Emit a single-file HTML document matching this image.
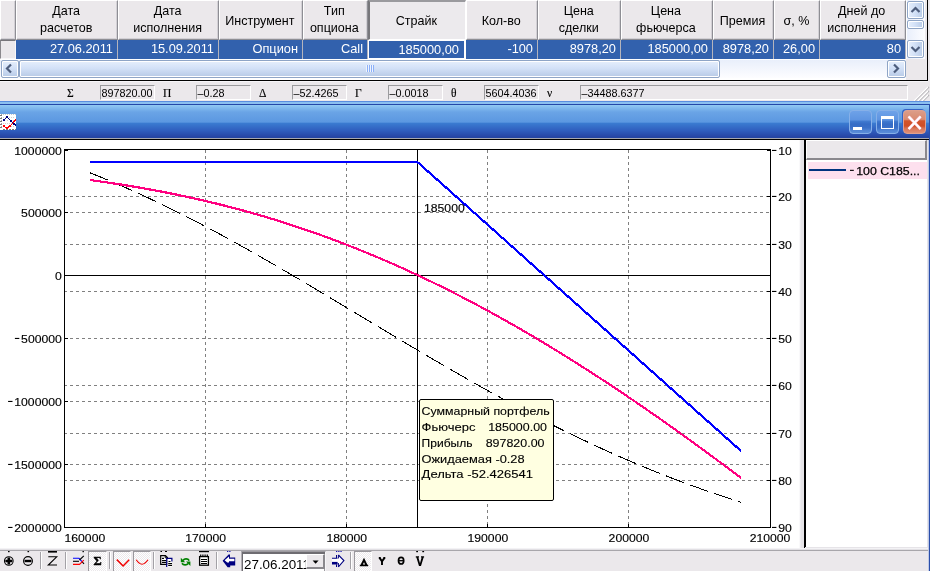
<!DOCTYPE html>
<html><head><meta charset="utf-8">
<style>
html,body{margin:0;padding:0}
body{width:930px;height:571px;position:relative;overflow:hidden;background:#ebe8eb;font-family:"Liberation Sans",sans-serif;font-size:13px;color:#000}
.abs{position:absolute}
/* table */
#grid{left:0;top:0;width:927px;height:80px;background:#fff;border-right:1px solid #000;border-bottom:1px solid #000;box-shadow:0 1px 0 #f6f5f8}
.hc{position:absolute;top:0;height:40px;background:#ebe8eb;box-sizing:border-box;border-left:1px solid #fff;border-top:1px solid #fff;border-right:1px solid #8e8e94;border-bottom:1px solid #8e8e94;box-shadow:inset -1px -1px 0 #d2d0d5;text-align:center;font-size:13px;line-height:17px;display:flex;align-items:center;justify-content:center;padding-bottom:2px}
.hc.press{border-left:2px solid #77777b;border-top:2px solid #9a9a9e;border-right:1px solid #fff;border-bottom:1px solid #fff;background:#eceaed;box-shadow:none}
.rc{position:absolute;top:40px;height:19px;background:#3261ad;color:#fff;box-sizing:border-box;border-right:1px solid #b4b4bc;text-align:right;font-size:12.8px;line-height:18px;padding-right:4px}
.sx{display:inline-block;transform-origin:100% 50%;white-space:nowrap}
.hc .sx{transform-origin:50% 50%;transform:scaleX(0.965);position:relative;left:-1px}.hc .s1{top:1px}
/* stats */
.sb{position:absolute;top:85px;height:15px;width:55px;box-sizing:border-box;border-top:1px solid #9b9b9e;border-left:1px solid #9b9b9e;border-right:1px solid #fff;border-bottom:1px solid #fff;font-size:10.8px;line-height:14px;padding-left:0.5px;white-space:nowrap;overflow:hidden}
.sl{position:absolute;top:85px;font-family:"Liberation Serif",serif;font-size:11.5px;line-height:16px;-webkit-text-stroke:0.15px #000}
/* title */
#title{left:0;top:101px;width:930px;height:37px;background:linear-gradient(#5a8ee0 0,#5a8ee0 1px,#8cc0f0 1px,#8cc0f0 3px,#2448a8 3px,#2448a8 4px,#92caf3 4px,#86bff0 6px,#6aa4e6 11px,#5e9ae2 19px,#5c98e1 21px,#3a7ad0 22.5px,#3060c0 29px,#2848a8 35px,#2444a0 37px)}
.sbtn{box-sizing:border-box;border:1px solid #8fa5c6;border-radius:2px;background:linear-gradient(#e6effc,#d3e1f7 45%,#b7cae6);box-shadow:inset 0 0 0 1px #fff}.sbtn.v{background:linear-gradient(90deg,#e6effc,#d3e1f7 45%,#b7cae6)}
.sbtn svg{display:block;position:absolute;left:-1px;top:-1px}

.tbtn{position:absolute;top:110px;width:23px;height:24px;box-sizing:border-box;border:1px solid #86b0e8;border-radius:4px;background:linear-gradient(#6ea2e8 0,#5e94e1 40%,#3e78ce 48%,#356cc6 60%,#3a70c8 76%,#5386d4 90%,#5a8cd8 100%)}
.tbtn.cl{box-shadow:-1px -1px 0 #3462c6;background:linear-gradient(#dc9c88 0,#d98b72 38%,#d2542c 45%,#cf4e27 68%,#d9775a 80%,#de9078 100%);border-color:#e0a08e}
.sep{position:absolute;top:552px;width:2px;height:17px;background:linear-gradient(90deg,#a3a1a6 0,#a3a1a6 50%,#fff 50%)}
.chk{position:absolute;top:551px;height:20px;box-sizing:border-box;border-top:1px solid #9a989d;border-left:1px solid #9a989d;border-right:1px solid #fff;background-color:#f5f4f6;background-image:repeating-conic-gradient(#fff 0 25%,#ebe8eb 0 50%);background-size:2px 2px}
</style></head><body><div id="root" style="position:absolute;left:0;top:0;width:930px;height:571px;will-change:transform">
<!-- GRID -->
<div class="abs" id="grid"></div>
<div class="hc" style="left:0;width:16px"></div>
<div class="hc" style="left:16px;width:102px"><span class="sx">Дата<br>расчетов</span></div>
<div class="hc" style="left:118px;width:101px"><span class="sx">Дата<br>исполнения</span></div>
<div class="hc" style="left:219px;width:84px"><span class="sx s1">Инструмент</span></div>
<div class="hc" style="left:303px;width:65px"><span class="sx">Тип<br>опциона</span></div>
<div class="hc press" style="left:368px;width:98px"><span class="sx s1">Страйк</span></div>
<div class="hc" style="left:466px;width:72px"><span class="sx s1">Кол-во</span></div>
<div class="hc" style="left:538px;width:83px"><span class="sx">Цена<br>сделки</span></div>
<div class="hc" style="left:621px;width:92px"><span class="sx">Цена<br>фьючерса</span></div>
<div class="hc" style="left:713px;width:61px"><span class="sx s1">Премия</span></div>
<div class="hc" style="left:774px;width:46px"><span class="sx s1">σ, %</span></div>
<div class="hc" style="left:820px;width:86px"><span class="sx">Дней до<br>исполнения</span></div>
<div class="abs" style="left:0;top:40px;width:16px;height:19px;box-sizing:border-box;background:#ebe8eb;border-left:1px solid #8a888d;border-top:1px solid #77757a;border-right:1px solid #f8f7f9;border-bottom:1px solid #f8f7f9"></div>
<div class="rc" style="left:16px;width:102px"><span class="sx">27.06.2011</span></div>
<div class="rc" style="left:118px;width:101px"><span class="sx">15.09.2011</span></div>
<div class="rc" style="left:219px;width:84px"><span class="sx">Опцион</span></div>
<div class="rc" style="left:303px;width:65px"><span class="sx">Call</span></div>
<div class="rc" style="left:368px;width:98px;border:1px solid #fff;border-right:2px solid #fff;line-height:17px;padding-right:5px"><span class="sx">185000,00</span></div>
<div class="rc" style="left:466px;width:72px"><span class="sx">-100</span></div>
<div class="rc" style="left:538px;width:83px"><span class="sx">8978,20</span></div>
<div class="rc" style="left:621px;width:92px"><span class="sx">185000,00</span></div>
<div class="rc" style="left:713px;width:61px"><span class="sx">8978,20</span></div>
<div class="rc" style="left:774px;width:46px"><span class="sx">26,00</span></div>
<div class="rc" style="left:820px;width:86px"><span class="sx">80</span></div>
<!-- hscroll -->
<div class="abs" id="hs" style="left:0;top:60px;width:906px;height:18px;background:linear-gradient(#e9effb,#fdfdff)"></div>
<div class="abs" id="vs" style="left:907px;top:0;width:18px;height:59px;background:linear-gradient(90deg,#e9effb,#fdfdff)"></div>

<div class="abs" style="left:906px;top:59px;width:21px;height:21px;background:#ebe8eb"></div>
<div class="abs" style="left:925px;top:0;width:2px;height:60px;background:#ebe8eb"></div>
<svg class="abs" style="left:908px;top:84px" width="22" height="18" viewBox="0 0 22 18"><g stroke-width="1.2" fill="none"><path d="M7 17 L21 3 M11 17 L21 7 M15 17 L21 11" stroke="#a9a7ac"/><path d="M6 17 L20 3 M10 17 L20 7 M14 17 L20 11" stroke="#fff"/></g></svg>
<!-- hscroll parts -->
<div class="abs sbtn" style="left:1px;top:60px;width:18px;height:18px"><svg width="17" height="17" viewBox="0 0 17 17"><path d="M10 4.5 L6 8.5 L10 12.5" fill="none" stroke="#4d5d7c" stroke-width="2.2"/></svg></div>
<div class="abs sbtn" style="left:887px;top:60px;width:19px;height:18px"><svg width="18" height="17" viewBox="0 0 18 17"><path d="M7 4.5 L11 8.5 L7 12.5" fill="none" stroke="#4d5d7c" stroke-width="2.2"/></svg></div>
<div class="abs" style="left:19px;top:60px;width:701px;height:18px;box-sizing:border-box;border:1px solid #8fa5c6;border-radius:2px;box-shadow:inset 0 0 0 1px #fff;background:linear-gradient(#e6effc,#d3e1f7 45%,#b7cae6)"></div>
<div class="abs" style="left:366px;top:65px;width:8px;height:7px;background:repeating-linear-gradient(90deg,#eef4fe 0,#eef4fe 1px,#8cb0f8 1px,#8cb0f8 2px)"></div>
<!-- vscroll parts -->
<div class="abs sbtn v" style="left:907px;top:1px;width:17px;height:18px"><svg width="17" height="18" viewBox="0 0 17 18"><path d="M4.5 11 L8.5 7 L12.5 11" fill="none" stroke="#4d5d7c" stroke-width="2.2"/></svg></div>
<div class="abs sbtn v" style="left:907px;top:40px;width:17px;height:18px"><svg width="17" height="18" viewBox="0 0 17 18"><path d="M4.5 7 L8.5 11 L12.5 7" fill="none" stroke="#4d5d7c" stroke-width="2.2"/></svg></div>
<div class="abs" style="left:907px;top:20px;width:17px;height:9px;box-sizing:border-box;border:1px solid #8fa5c6;border-radius:2px;box-shadow:inset 0 0 0 1px #fff;background:linear-gradient(90deg,#e6effc,#d3e1f7 45%,#b7cae6)"></div>
<!-- STATS -->
<div class="sl" style="left:67px">Σ</div><div class="sb" style="left:100px">897820.00</div>
<div class="sl" style="left:163px">Π</div><div class="sb" style="left:196px">–0.28</div>
<div class="sl" style="left:259px">Δ</div><div class="sb" style="left:292px">–52.4265</div>
<div class="sl" style="left:355px">Γ</div><div class="sb" style="left:388px">–0.0018</div>
<div class="sl" style="left:451px">θ</div><div class="sb" style="left:484px">5604.4036</div>
<div class="sl" style="left:547px">ν</div><div class="sb" style="left:580px;width:328px">–34488.6377</div>
<!-- TITLE -->
<div class="abs" id="title"></div>
<div class="abs" style="left:0;top:138px;width:930px;height:1px;background:#a8a8b0"></div><div class="abs" style="left:0;top:139px;width:930px;height:1px;background:#000"></div>

<!-- title icon + buttons -->
<svg class="abs" style="left:0;top:114px" width="16" height="16" viewBox="0 0 16 16" shape-rendering="crispEdges"><rect width="16" height="16" fill="#fff"/><rect x="1" y="0" width="1" height="1" fill="#c8c8c8"/><rect x="3" y="0" width="1" height="1" fill="#c8c8c8"/><rect x="5" y="0" width="1" height="1" fill="#c8c8c8"/><rect x="7" y="0" width="1" height="1" fill="#c8c8c8"/><rect x="9" y="0" width="1" height="1" fill="#c8c8c8"/><rect x="11" y="0" width="1" height="1" fill="#c8c8c8"/><rect x="13" y="0" width="1" height="1" fill="#c8c8c8"/><rect x="15" y="0" width="1" height="1" fill="#c8c8c8"/><rect x="3" y="15" width="2" height="1" fill="#7a7a7a"/><rect x="6" y="15" width="2" height="1" fill="#7a7a7a"/><rect x="9" y="15" width="2" height="1" fill="#7a7a7a"/><rect x="12" y="15" width="2" height="1" fill="#7a7a7a"/><rect x="15" y="15" width="2" height="1" fill="#7a7a7a"/><rect x="0" y="1" width="2" height="1" fill="#7a7a7a"/><rect x="1" y="0" width="1" height="1" fill="#a0a0a0"/><rect x="0" y="4" width="2" height="1" fill="#7a7a7a"/><rect x="1" y="3" width="1" height="1" fill="#a0a0a0"/><rect x="0" y="7" width="2" height="1" fill="#7a7a7a"/><rect x="1" y="6" width="1" height="1" fill="#a0a0a0"/><rect x="0" y="10" width="2" height="1" fill="#7a7a7a"/><rect x="1" y="9" width="1" height="1" fill="#a0a0a0"/><rect x="0" y="13" width="2" height="1" fill="#7a7a7a"/><rect x="1" y="12" width="1" height="1" fill="#a0a0a0"/><rect x="3" y="3" width="1" height="1" fill="#d0d0d0"/><rect x="5" y="3" width="1" height="1" fill="#d0d0d0"/><rect x="7" y="3" width="1" height="1" fill="#d0d0d0"/><rect x="9" y="3" width="1" height="1" fill="#d0d0d0"/><rect x="11" y="3" width="1" height="1" fill="#d0d0d0"/><rect x="13" y="3" width="1" height="1" fill="#d0d0d0"/><rect x="3" y="9" width="1" height="1" fill="#d0d0d0"/><rect x="5" y="9" width="1" height="1" fill="#d0d0d0"/><rect x="7" y="9" width="1" height="1" fill="#d0d0d0"/><rect x="9" y="9" width="1" height="1" fill="#d0d0d0"/><rect x="11" y="9" width="1" height="1" fill="#d0d0d0"/><rect x="13" y="9" width="1" height="1" fill="#d0d0d0"/><rect x="7" y="6" width="1" height="1" fill="#d0d0d0"/><rect x="13" y="6" width="1" height="1" fill="#d0d0d0"/><rect x="11" y="12" width="1" height="1" fill="#d0d0d0"/><rect x="13" y="12" width="1" height="1" fill="#d0d0d0"/><polyline points="4,6 7,3 11,7 14,10 16,11.5" fill="none" stroke="#000080" stroke-width="1"/><polyline points="4,12 6.5,14.5 10,12 16,5.5" fill="none" stroke="#ff0000" stroke-width="1"/><rect x="3" y="5" width="2" height="2" fill="#000080"/><rect x="6" y="2" width="2" height="2" fill="#000080"/><rect x="10" y="6" width="2" height="2" fill="#000080"/><rect x="13" y="9" width="2" height="2" fill="#000080"/><rect x="15" y="11" width="1" height="1" fill="#000080"/><rect x="3" y="11" width="2" height="2" fill="#ff0000"/><rect x="9" y="11" width="2" height="2" fill="#ff0000"/><rect x="5" y="13" width="4" height="1" fill="#ff0000"/><rect x="6" y="14" width="2" height="1" fill="#ff0000"/><rect x="15" y="5" width="1" height="2" fill="#ff0000"/></svg>
<div class="tbtn" style="left:849px"><div class="abs" style="left:3px;top:16px;width:9px;height:3px;background:#fff"></div></div>
<div class="tbtn" style="left:876px"><div class="abs" style="left:4px;top:5px;width:13px;height:13px;box-sizing:border-box;border:1px solid #fff;border-top-width:3px"></div></div>
<div class="tbtn cl" style="left:903px"><svg class="abs" style="left:-1px;top:-1px" width="24" height="24" viewBox="0 0 24 24"><path d="M5.6 6.5 L17.6 19 M17.6 6.5 L5.6 19" stroke="#ffd8ec" stroke-width="2.8" fill="none"/><path d="M5.6 6.5 L17.6 19 M17.6 6.5 L5.6 19" stroke="#fff" stroke-width="1.8" fill="none"/></svg></div>
<!-- CHART AREA -->
<div class="abs" style="left:0;top:140px;width:799px;height:408px;background:#fff"></div>
<div class="abs" style="left:799px;top:140px;width:5px;height:408px;background:linear-gradient(90deg,#fff 0,#f4f3f6 1px,#e6e4e8 2px,#e6e4e8 100%)"></div>
<div class="abs" style="left:804px;top:140px;width:126px;height:408px;background:#fff;border-left:2px solid #000;box-sizing:border-box"></div>

<!-- legend -->
<div class="abs" style="left:806px;top:140px;width:121px;height:20px;box-sizing:border-box;background:#ebe8eb;border-top:1px solid #fff;border-left:1px solid #fff;border-right:2px solid #8a888d;border-bottom:2px solid #8a888d"></div>
<div class="abs" style="left:808px;top:162px;width:119px;height:17px;background:#fde0ee"></div>
<div class="abs" style="left:809px;top:169px;width:37px;height:2px;background:#00337f"></div>
<svg class="abs" style="left:0;top:0;pointer-events:none" width="930" height="571" font-family="Liberation Sans, sans-serif" font-size="11.6" stroke="#000" stroke-width="0.25"><rect x="850" y="169.8" width="3.8" height="1.1" stroke="none"/><text x="856.2" y="174.6" textLength="63.8" lengthAdjust="spacingAndGlyphs">100 C185...</text></svg>
<svg id="chart" width="930" height="571" viewBox="0 0 930 571" style="position:absolute;left:0;top:0" shape-rendering="crispEdges">
<g stroke="#808080" stroke-width="1" stroke-dasharray="3 3"><line x1="64" x2="770" y1="212.5" y2="212.5"/><line x1="64" x2="770" y1="338.5" y2="338.5"/><line x1="64" x2="770" y1="401.5" y2="401.5"/><line x1="64" x2="770" y1="464.5" y2="464.5"/><line x1="64" x2="770" y1="196.5" y2="196.5"/><line x1="64" x2="770" y1="244.5" y2="244.5"/><line x1="64" x2="770" y1="291.5" y2="291.5"/><line x1="64" x2="770" y1="385.5" y2="385.5"/><line x1="64" x2="770" y1="433.5" y2="433.5"/><line x1="64" x2="770" y1="480.5" y2="480.5"/><line x1="205.5" x2="205.5" y1="150" y2="527"/><line x1="346.5" x2="346.5" y1="150" y2="527"/><line x1="487.5" x2="487.5" y1="150" y2="527"/><line x1="628.5" x2="628.5" y1="150" y2="527"/></g>
<g stroke="#000" stroke-width="1" fill="none">
<rect x="64.5" y="149.5" width="706" height="378"/>
<line x1="64" x2="771" y1="275.5" y2="275.5"/>
<line x1="417.5" x2="417.5" y1="150" y2="527"/>
<line x1="64" x2="68" y1="150.5" y2="150.5"/>
<line x1="64" x2="68" y1="212.5" y2="212.5"/>
<line x1="64" x2="68" y1="275.5" y2="275.5"/>
<line x1="64" x2="68" y1="338.5" y2="338.5"/>
<line x1="64" x2="68" y1="401.5" y2="401.5"/>
<line x1="64" x2="68" y1="464.5" y2="464.5"/>
<line x1="64" x2="68" y1="527.5" y2="527.5"/>
<line x1="767" x2="771" y1="150.5" y2="150.5"/>
<line x1="767" x2="771" y1="196.5" y2="196.5"/>
<line x1="767" x2="771" y1="244.5" y2="244.5"/>
<line x1="767" x2="771" y1="291.5" y2="291.5"/>
<line x1="767" x2="771" y1="338.5" y2="338.5"/>
<line x1="767" x2="771" y1="385.5" y2="385.5"/>
<line x1="767" x2="771" y1="433.5" y2="433.5"/>
<line x1="767" x2="771" y1="480.5" y2="480.5"/>
<line x1="767" x2="771" y1="527.5" y2="527.5"/>
<line x1="205.5" x2="205.5" y1="524" y2="528"/>
<line x1="346.5" x2="346.5" y1="524" y2="528"/>
<line x1="487.5" x2="487.5" y1="524" y2="528"/>
<line x1="628.5" x2="628.5" y1="524" y2="528"/>
</g>
<g fill="none" stroke="#000" stroke-width="1"><polyline points="90.0,172.8 91.0,173.2 92.0,173.6 93.0,174.0 94.0,174.4 95.0,174.8 96.0,175.2 97.0,175.6 98.0,176.0 99.0,176.4 100.0,176.8 101.0,177.2 102.0,177.6 103.0,178.0 104.0,178.4 105.0,178.9 106.0,179.3 107.0,179.7 108.0,180.1"/><polyline points="114.0,182.6 115.0,183.1 116.0,183.5 117.0,183.9 118.0,184.3 119.0,184.8 120.0,185.2 121.0,185.6 122.0,186.1 123.0,186.5 124.0,187.0 125.0,187.4 126.0,187.8 127.0,188.3 128.0,188.7 129.0,189.2 130.0,189.6 131.0,190.1 132.0,190.5"/><polyline points="138.0,193.2 139.0,193.7 140.0,194.1 141.0,194.6 142.0,195.0 143.0,195.5 144.0,196.0 145.0,196.4 146.0,196.9 147.0,197.4 148.0,197.8 149.0,198.3 150.0,198.8 151.0,199.2 152.0,199.7 153.0,200.2 154.0,200.7 155.0,201.1 156.0,201.6"/><polyline points="162.0,204.5 163.0,205.0 164.0,205.5 165.0,205.9 166.0,206.4 167.0,206.9 168.0,207.4 169.0,207.9 170.0,208.4 171.0,208.9 172.0,209.4 173.0,209.9 174.0,210.4 175.0,210.9 176.0,211.4 177.0,211.9 178.0,212.4 179.0,212.9 180.0,213.4"/><polyline points="186.0,216.4 187.0,216.9 188.0,217.4 189.0,217.9 190.0,218.4 191.0,219.0 192.0,219.5 193.0,220.0 194.0,220.5 195.0,221.0 196.0,221.5 197.0,222.1 198.0,222.6 199.0,223.1 200.0,223.6 201.0,224.1 202.0,224.7 203.0,225.2 204.0,225.7"/><polyline points="210.0,228.9 211.0,229.4 212.0,230.0 213.0,230.5 214.0,231.0 215.0,231.6 216.0,232.1 217.0,232.6 218.0,233.2 219.0,233.7 220.0,234.3 221.0,234.8 222.0,235.3 223.0,235.9 224.0,236.4 225.0,237.0 226.0,237.5 227.0,238.1 228.0,238.6"/><polyline points="234.0,241.9 235.0,242.5 236.0,243.0 237.0,243.6 238.0,244.1 239.0,244.7 240.0,245.2 241.0,245.8 242.0,246.4 243.0,246.9 244.0,247.5 245.0,248.0 246.0,248.6 247.0,249.2 248.0,249.7 249.0,250.3 250.0,250.9 251.0,251.4 252.0,252.0"/><polyline points="258.0,255.4 259.0,256.0 260.0,256.5 261.0,257.1 262.0,257.7 263.0,258.2 264.0,258.8 265.0,259.4 266.0,260.0 267.0,260.5 268.0,261.1 269.0,261.7 270.0,262.3 271.0,262.8 272.0,263.4 273.0,264.0 274.0,264.6 275.0,265.2 276.0,265.7"/><polyline points="282.0,269.2 283.0,269.8 284.0,270.4 285.0,271.0 286.0,271.6 287.0,272.1 288.0,272.7 289.0,273.3 290.0,273.9 291.0,274.5 292.0,275.1 293.0,275.7 294.0,276.2 295.0,276.8 296.0,277.4 297.0,278.0 298.0,278.6 299.0,279.2 300.0,279.8"/><polyline points="306.0,283.3 307.0,283.9 308.0,284.5 309.0,285.1 310.0,285.7 311.0,286.3 312.0,286.9 313.0,287.5 314.0,288.1 315.0,288.7 316.0,289.3 317.0,289.9 318.0,290.5 319.0,291.1 320.0,291.7 321.0,292.3 322.0,292.9 323.0,293.5 324.0,294.1"/><polyline points="330.0,297.7 331.0,298.3 332.0,298.9 333.0,299.4 334.0,300.0 335.0,300.6 336.0,301.3 337.0,301.9 338.0,302.5 339.0,303.1 340.0,303.7 341.0,304.3 342.0,304.9 343.0,305.5 344.0,306.1 345.0,306.7 346.0,307.3 347.0,307.9 348.0,308.5"/><polyline points="354.0,312.1 355.0,312.7 356.0,313.3 357.0,313.9 358.0,314.5 359.0,315.1 360.0,315.7 361.0,316.3 362.0,316.9 363.0,317.5 364.0,318.1 365.0,318.7 366.0,319.3 367.0,319.9 368.0,320.5 369.0,321.1 370.0,321.7 371.0,322.3 372.0,322.9"/><polyline points="378.0,326.5 379.0,327.1 380.0,327.7 381.0,328.3 382.0,328.9 383.0,329.5 384.0,330.1 385.0,330.7 386.0,331.3 387.0,331.9 388.0,332.5 389.0,333.1 390.0,333.7 391.0,334.3 392.0,334.9 393.0,335.5 394.0,336.1 395.0,336.7 396.0,337.3"/><polyline points="402.0,340.9 403.0,341.5 404.0,342.1 405.0,342.7 406.0,343.3 407.0,343.9 408.0,344.5 409.0,345.1 410.0,345.7 411.0,346.3 412.0,346.9 413.0,347.4 414.0,348.0 415.0,348.6 416.0,349.2 417.0,349.8 418.0,350.4 419.0,351.0 420.0,351.6"/><polyline points="426.0,355.1 427.0,355.7 428.0,356.3 429.0,356.9 430.0,357.5 431.0,358.1 432.0,358.7 433.0,359.2 434.0,359.8 435.0,360.4 436.0,361.0 437.0,361.6 438.0,362.2 439.0,362.8 440.0,363.3 441.0,363.9 442.0,364.5 443.0,365.1 444.0,365.7"/><polyline points="450.0,369.1 451.0,369.7 452.0,370.3 453.0,370.9 454.0,371.5 455.0,372.0 456.0,372.6 457.0,373.2 458.0,373.8 459.0,374.3 460.0,374.9 461.0,375.5 462.0,376.0 463.0,376.6 464.0,377.2 465.0,377.8 466.0,378.3 467.0,378.9 468.0,379.5"/><polyline points="474.0,382.9 475.0,383.4 476.0,384.0 477.0,384.6 478.0,385.1 479.0,385.7 480.0,386.2 481.0,386.8 482.0,387.4 483.0,387.9 484.0,388.5 485.0,389.0 486.0,389.6 487.0,390.1 488.0,390.7 489.0,391.3 490.0,391.8 491.0,392.4 492.0,392.9"/><polyline points="498.0,396.2 499.0,396.8 500.0,397.3 501.0,397.9 502.0,398.4 503.0,399.0 504.0,399.5 505.0,400.0 506.0,400.6 507.0,401.1 508.0,401.7 509.0,402.2 510.0,402.7 511.0,403.3 512.0,403.8 513.0,404.4 514.0,404.9 515.0,405.4 516.0,406.0"/><polyline points="522.0,409.2 523.0,409.7 524.0,410.2 525.0,410.7 526.0,411.3 527.0,411.8 528.0,412.3 529.0,412.8 530.0,413.4 531.0,413.9 532.0,414.4 533.0,414.9 534.0,415.5 535.0,416.0 536.0,416.5 537.0,417.0 538.0,417.5 539.0,418.0 540.0,418.6"/><polyline points="546.0,421.6 547.0,422.1 548.0,422.7 549.0,423.2 550.0,423.7 551.0,424.2 552.0,424.7 553.0,425.2 554.0,425.7 555.0,426.2 556.0,426.7 557.0,427.2 558.0,427.7 559.0,428.2 560.0,428.7 561.0,429.2 562.0,429.7 563.0,430.2 564.0,430.7"/><polyline points="570.0,433.6 571.0,434.1 572.0,434.6 573.0,435.1 574.0,435.5 575.0,436.0 576.0,436.5 577.0,437.0 578.0,437.5 579.0,438.0 580.0,438.4 581.0,438.9 582.0,439.4 583.0,439.9 584.0,440.3 585.0,440.8 586.0,441.3 587.0,441.8 588.0,442.2"/><polyline points="594.0,445.0 595.0,445.5 596.0,446.0 597.0,446.4 598.0,446.9 599.0,447.3 600.0,447.8 601.0,448.3 602.0,448.7 603.0,449.2 604.0,449.6 605.0,450.1 606.0,450.5 607.0,451.0 608.0,451.4 609.0,451.9 610.0,452.3 611.0,452.8 612.0,453.2"/><polyline points="618.0,455.9 619.0,456.3 620.0,456.8 621.0,457.2 622.0,457.6 623.0,458.1 624.0,458.5 625.0,458.9 626.0,459.4 627.0,459.8 628.0,460.2 629.0,460.7 630.0,461.1 631.0,461.5 632.0,461.9 633.0,462.4 634.0,462.8 635.0,463.2 636.0,463.6"/><polyline points="642.0,466.2 643.0,466.6 644.0,467.0 645.0,467.4 646.0,467.8 647.0,468.2 648.0,468.6 649.0,469.0 650.0,469.4 651.0,469.9 652.0,470.3 653.0,470.7 654.0,471.1 655.0,471.5 656.0,471.9 657.0,472.3 658.0,472.7 659.0,473.1 660.0,473.5"/><polyline points="666.0,475.8 667.0,476.2 668.0,476.6 669.0,477.0 670.0,477.4 671.0,477.8 672.0,478.2 673.0,478.5 674.0,478.9 675.0,479.3 676.0,479.7 677.0,480.1 678.0,480.4 679.0,480.8 680.0,481.2 681.0,481.6 682.0,481.9 683.0,482.3 684.0,482.7"/><polyline points="690.0,484.9 691.0,485.3 692.0,485.6 693.0,486.0 694.0,486.4 695.0,486.7 696.0,487.1 697.0,487.4 698.0,487.8 699.0,488.1 700.0,488.5 701.0,488.9 702.0,489.2 703.0,489.6 704.0,489.9 705.0,490.3 706.0,490.6 707.0,491.0 708.0,491.3"/><polyline points="714.0,493.4 715.0,493.7 716.0,494.1 717.0,494.4 718.0,494.7 719.0,495.1 720.0,495.4 721.0,495.7 722.0,496.1 723.0,496.4 724.0,496.7 725.0,497.1 726.0,497.4 727.0,497.7 728.0,498.0 729.0,498.4 730.0,498.7 731.0,499.0 732.0,499.3"/><polyline points="738.0,501.3 739.0,501.6 740.0,501.9 741.0,502.2"/></g>
<polyline fill="none" stroke="#ff0080" stroke-width="2.2" points="90.0,180.0 91.0,180.2 92.0,180.3 93.0,180.4 94.0,180.6 95.0,180.7 96.0,180.9 97.0,181.0 98.0,181.1 99.0,181.3 100.0,181.4 101.0,181.6 102.0,181.7 103.0,181.8 104.0,182.0 105.0,182.1 106.0,182.3 107.0,182.4 108.0,182.6 109.0,182.7 110.0,182.9 111.0,183.0 112.0,183.2 113.0,183.3 114.0,183.5 115.0,183.6 116.0,183.8 117.0,183.9 118.0,184.1 119.0,184.2 120.0,184.4 121.0,184.5 122.0,184.7 123.0,184.9 124.0,185.0 125.0,185.2 126.0,185.3 127.0,185.5 128.0,185.7 129.0,185.8 130.0,186.0 131.0,186.2 132.0,186.3 133.0,186.5 134.0,186.7 135.0,186.8 136.0,187.0 137.0,187.2 138.0,187.3 139.0,187.5 140.0,187.7 141.0,187.9 142.0,188.0 143.0,188.2 144.0,188.4 145.0,188.6 146.0,188.8 147.0,188.9 148.0,189.1 149.0,189.3 150.0,189.5 151.0,189.7 152.0,189.8 153.0,190.0 154.0,190.2 155.0,190.4 156.0,190.6 157.0,190.8 158.0,191.0 159.0,191.2 160.0,191.3 161.0,191.5 162.0,191.7 163.0,191.9 164.0,192.1 165.0,192.3 166.0,192.5 167.0,192.7 168.0,192.9 169.0,193.1 170.0,193.3 171.0,193.5 172.0,193.7 173.0,193.9 174.0,194.1 175.0,194.3 176.0,194.5 177.0,194.7 178.0,194.9 179.0,195.1 180.0,195.4 181.0,195.6 182.0,195.8 183.0,196.0 184.0,196.2 185.0,196.4 186.0,196.6 187.0,196.8 188.0,197.1 189.0,197.3 190.0,197.5 191.0,197.7 192.0,197.9 193.0,198.2 194.0,198.4 195.0,198.6 196.0,198.8 197.0,199.1 198.0,199.3 199.0,199.5 200.0,199.7 201.0,200.0 202.0,200.2 203.0,200.4 204.0,200.7 205.0,200.9 206.0,201.1 207.0,201.4 208.0,201.6 209.0,201.9 210.0,202.1 211.0,202.3 212.0,202.6 213.0,202.8 214.0,203.1 215.0,203.3 216.0,203.5 217.0,203.8 218.0,204.0 219.0,204.3 220.0,204.5 221.0,204.8 222.0,205.0 223.0,205.3 224.0,205.5 225.0,205.8 226.0,206.1 227.0,206.3 228.0,206.6 229.0,206.8 230.0,207.1 231.0,207.3 232.0,207.6 233.0,207.9 234.0,208.1 235.0,208.4 236.0,208.7 237.0,208.9 238.0,209.2 239.0,209.5 240.0,209.7 241.0,210.0 242.0,210.3 243.0,210.5 244.0,210.8 245.0,211.1 246.0,211.4 247.0,211.6 248.0,211.9 249.0,212.2 250.0,212.5 251.0,212.8 252.0,213.1 253.0,213.3 254.0,213.6 255.0,213.9 256.0,214.2 257.0,214.5 258.0,214.8 259.0,215.1 260.0,215.3 261.0,215.6 262.0,215.9 263.0,216.2 264.0,216.5 265.0,216.8 266.0,217.1 267.0,217.4 268.0,217.7 269.0,218.0 270.0,218.3 271.0,218.6 272.0,218.9 273.0,219.2 274.0,219.5 275.0,219.8 276.0,220.2 277.0,220.5 278.0,220.8 279.0,221.1 280.0,221.4 281.0,221.7 282.0,222.0 283.0,222.3 284.0,222.7 285.0,223.0 286.0,223.3 287.0,223.6 288.0,223.9 289.0,224.3 290.0,224.6 291.0,224.9 292.0,225.2 293.0,225.6 294.0,225.9 295.0,226.2 296.0,226.6 297.0,226.9 298.0,227.2 299.0,227.6 300.0,227.9 301.0,228.2 302.0,228.6 303.0,228.9 304.0,229.2 305.0,229.6 306.0,229.9 307.0,230.3 308.0,230.6 309.0,231.0 310.0,231.3 311.0,231.6 312.0,232.0 313.0,232.3 314.0,232.7 315.0,233.0 316.0,233.4 317.0,233.8 318.0,234.1 319.0,234.5 320.0,234.8 321.0,235.2 322.0,235.5 323.0,235.9 324.0,236.3 325.0,236.6 326.0,237.0 327.0,237.4 328.0,237.7 329.0,238.1 330.0,238.5 331.0,238.8 332.0,239.2 333.0,239.6 334.0,239.9 335.0,240.3 336.0,240.7 337.0,241.1 338.0,241.4 339.0,241.8 340.0,242.2 341.0,242.6 342.0,243.0 343.0,243.4 344.0,243.7 345.0,244.1 346.0,244.5 347.0,244.9 348.0,245.3 349.0,245.7 350.0,246.1 351.0,246.5 352.0,246.9 353.0,247.3 354.0,247.6 355.0,248.0 356.0,248.4 357.0,248.8 358.0,249.2 359.0,249.6 360.0,250.0 361.0,250.5 362.0,250.9 363.0,251.3 364.0,251.7 365.0,252.1 366.0,252.5 367.0,252.9 368.0,253.3 369.0,253.7 370.0,254.1 371.0,254.6 372.0,255.0 373.0,255.4 374.0,255.8 375.0,256.2 376.0,256.6 377.0,257.1 378.0,257.5 379.0,257.9 380.0,258.3 381.0,258.8 382.0,259.2 383.0,259.6 384.0,260.1 385.0,260.5 386.0,260.9 387.0,261.4 388.0,261.8 389.0,262.2 390.0,262.7 391.0,263.1 392.0,263.5 393.0,264.0 394.0,264.4 395.0,264.9 396.0,265.3 397.0,265.7 398.0,266.2 399.0,266.6 400.0,267.1 401.0,267.5 402.0,268.0 403.0,268.4 404.0,268.9 405.0,269.3 406.0,269.8 407.0,270.3 408.0,270.7 409.0,271.2 410.0,271.6 411.0,272.1 412.0,272.6 413.0,273.0 414.0,273.5 415.0,273.9 416.0,274.4 417.0,274.9 418.0,275.4 419.0,275.8 420.0,276.3 421.0,276.8 422.0,277.2 423.0,277.7 424.0,278.2 425.0,278.7 426.0,279.1 427.0,279.6 428.0,280.1 429.0,280.6 430.0,281.1 431.0,281.5 432.0,282.0 433.0,282.5 434.0,283.0 435.0,283.5 436.0,284.0 437.0,284.5 438.0,285.0 439.0,285.4 440.0,285.9 441.0,286.4 442.0,286.9 443.0,287.4 444.0,287.9 445.0,288.4 446.0,288.9 447.0,289.4 448.0,289.9 449.0,290.4 450.0,290.9 451.0,291.4 452.0,291.9 453.0,292.4 454.0,293.0 455.0,293.5 456.0,294.0 457.0,294.5 458.0,295.0 459.0,295.5 460.0,296.0 461.0,296.5 462.0,297.1 463.0,297.6 464.0,298.1 465.0,298.6 466.0,299.1 467.0,299.7 468.0,300.2 469.0,300.7 470.0,301.2 471.0,301.8 472.0,302.3 473.0,302.8 474.0,303.3 475.0,303.9 476.0,304.4 477.0,304.9 478.0,305.5 479.0,306.0 480.0,306.5 481.0,307.1 482.0,307.6 483.0,308.2 484.0,308.7 485.0,309.2 486.0,309.8 487.0,310.3 488.0,310.9 489.0,311.4 490.0,312.0 491.0,312.5 492.0,313.1 493.0,313.6 494.0,314.2 495.0,314.7 496.0,315.3 497.0,315.8 498.0,316.4 499.0,316.9 500.0,317.5 501.0,318.0 502.0,318.6 503.0,319.2 504.0,319.7 505.0,320.3 506.0,320.9 507.0,321.4 508.0,322.0 509.0,322.6 510.0,323.1 511.0,323.7 512.0,324.3 513.0,324.8 514.0,325.4 515.0,326.0 516.0,326.5 517.0,327.1 518.0,327.7 519.0,328.3 520.0,328.8 521.0,329.4 522.0,330.0 523.0,330.6 524.0,331.2 525.0,331.8 526.0,332.3 527.0,332.9 528.0,333.5 529.0,334.1 530.0,334.7 531.0,335.3 532.0,335.9 533.0,336.4 534.0,337.0 535.0,337.6 536.0,338.2 537.0,338.8 538.0,339.4 539.0,340.0 540.0,340.6 541.0,341.2 542.0,341.8 543.0,342.4 544.0,343.0 545.0,343.6 546.0,344.2 547.0,344.8 548.0,345.4 549.0,346.0 550.0,346.6 551.0,347.2 552.0,347.9 553.0,348.5 554.0,349.1 555.0,349.7 556.0,350.3 557.0,350.9 558.0,351.5 559.0,352.1 560.0,352.8 561.0,353.4 562.0,354.0 563.0,354.6 564.0,355.2 565.0,355.9 566.0,356.5 567.0,357.1 568.0,357.7 569.0,358.3 570.0,359.0 571.0,359.6 572.0,360.2 573.0,360.9 574.0,361.5 575.0,362.1 576.0,362.7 577.0,363.4 578.0,364.0 579.0,364.6 580.0,365.3 581.0,365.9 582.0,366.6 583.0,367.2 584.0,367.8 585.0,368.5 586.0,369.1 587.0,369.7 588.0,370.4 589.0,371.0 590.0,371.7 591.0,372.3 592.0,373.0 593.0,373.6 594.0,374.3 595.0,374.9 596.0,375.6 597.0,376.2 598.0,376.9 599.0,377.5 600.0,378.2 601.0,378.8 602.0,379.5 603.0,380.1 604.0,380.8 605.0,381.4 606.0,382.1 607.0,382.8 608.0,383.4 609.0,384.1 610.0,384.7 611.0,385.4 612.0,386.1 613.0,386.7 614.0,387.4 615.0,388.1 616.0,388.7 617.0,389.4 618.0,390.1 619.0,390.7 620.0,391.4 621.0,392.1 622.0,392.7 623.0,393.4 624.0,394.1 625.0,394.8 626.0,395.4 627.0,396.1 628.0,396.8 629.0,397.5 630.0,398.1 631.0,398.8 632.0,399.5 633.0,400.2 634.0,400.9 635.0,401.5 636.0,402.2 637.0,402.9 638.0,403.6 639.0,404.3 640.0,405.0 641.0,405.6 642.0,406.3 643.0,407.0 644.0,407.7 645.0,408.4 646.0,409.1 647.0,409.8 648.0,410.5 649.0,411.2 650.0,411.9 651.0,412.6 652.0,413.3 653.0,413.9 654.0,414.6 655.0,415.3 656.0,416.0 657.0,416.7 658.0,417.4 659.0,418.1 660.0,418.8 661.0,419.5 662.0,420.2 663.0,420.9 664.0,421.7 665.0,422.4 666.0,423.1 667.0,423.8 668.0,424.5 669.0,425.2 670.0,425.9 671.0,426.6 672.0,427.3 673.0,428.0 674.0,428.7 675.0,429.4 676.0,430.2 677.0,430.9 678.0,431.6 679.0,432.3 680.0,433.0 681.0,433.7 682.0,434.5 683.0,435.2 684.0,435.9 685.0,436.6 686.0,437.3 687.0,438.0 688.0,438.8 689.0,439.5 690.0,440.2 691.0,440.9 692.0,441.7 693.0,442.4 694.0,443.1 695.0,443.8 696.0,444.6 697.0,445.3 698.0,446.0 699.0,446.8 700.0,447.5 701.0,448.2 702.0,448.9 703.0,449.7 704.0,450.4 705.0,451.1 706.0,451.9 707.0,452.6 708.0,453.3 709.0,454.1 710.0,454.8 711.0,455.6 712.0,456.3 713.0,457.0 714.0,457.8 715.0,458.5 716.0,459.2 717.0,460.0 718.0,460.7 719.0,461.5 720.0,462.2 721.0,463.0 722.0,463.7 723.0,464.4 724.0,465.2 725.0,465.9 726.0,466.7 727.0,467.4 728.0,468.2 729.0,468.9 730.0,469.7 731.0,470.4 732.0,471.2 733.0,471.9 734.0,472.7 735.0,473.4 736.0,474.2 737.0,474.9 738.0,475.7 739.0,476.4 740.0,477.2 741.0,478.0"/>
<polyline fill="none" stroke="#0000ff" stroke-width="2.2" points="90.0,161.9 91.0,161.9 92.0,161.9 93.0,161.9 94.0,161.9 95.0,161.9 96.0,161.9 97.0,161.9 98.0,161.9 99.0,161.9 100.0,161.9 101.0,161.9 102.0,161.9 103.0,161.9 104.0,161.9 105.0,161.9 106.0,161.9 107.0,161.9 108.0,161.9 109.0,161.9 110.0,161.9 111.0,161.9 112.0,161.9 113.0,161.9 114.0,161.9 115.0,161.9 116.0,161.9 117.0,161.9 118.0,161.9 119.0,161.9 120.0,161.9 121.0,161.9 122.0,161.9 123.0,161.9 124.0,161.9 125.0,161.9 126.0,161.9 127.0,161.9 128.0,161.9 129.0,161.9 130.0,161.9 131.0,161.9 132.0,161.9 133.0,161.9 134.0,161.9 135.0,161.9 136.0,161.9 137.0,161.9 138.0,161.9 139.0,161.9 140.0,161.9 141.0,161.9 142.0,161.9 143.0,161.9 144.0,161.9 145.0,161.9 146.0,161.9 147.0,161.9 148.0,161.9 149.0,161.9 150.0,161.9 151.0,161.9 152.0,161.9 153.0,161.9 154.0,161.9 155.0,161.9 156.0,161.9 157.0,161.9 158.0,161.9 159.0,161.9 160.0,161.9 161.0,161.9 162.0,161.9 163.0,161.9 164.0,161.9 165.0,161.9 166.0,161.9 167.0,161.9 168.0,161.9 169.0,161.9 170.0,161.9 171.0,161.9 172.0,161.9 173.0,161.9 174.0,161.9 175.0,161.9 176.0,161.9 177.0,161.9 178.0,161.9 179.0,161.9 180.0,161.9 181.0,161.9 182.0,161.9 183.0,161.9 184.0,161.9 185.0,161.9 186.0,161.9 187.0,161.9 188.0,161.9 189.0,161.9 190.0,161.9 191.0,161.9 192.0,161.9 193.0,161.9 194.0,161.9 195.0,161.9 196.0,161.9 197.0,161.9 198.0,161.9 199.0,161.9 200.0,161.9 201.0,161.9 202.0,161.9 203.0,161.9 204.0,161.9 205.0,161.9 206.0,161.9 207.0,161.9 208.0,161.9 209.0,161.9 210.0,161.9 211.0,161.9 212.0,161.9 213.0,161.9 214.0,161.9 215.0,161.9 216.0,161.9 217.0,161.9 218.0,161.9 219.0,161.9 220.0,161.9 221.0,161.9 222.0,161.9 223.0,161.9 224.0,161.9 225.0,161.9 226.0,161.9 227.0,161.9 228.0,161.9 229.0,161.9 230.0,161.9 231.0,161.9 232.0,161.9 233.0,161.9 234.0,161.9 235.0,161.9 236.0,161.9 237.0,161.9 238.0,161.9 239.0,161.9 240.0,161.9 241.0,161.9 242.0,161.9 243.0,161.9 244.0,161.9 245.0,161.9 246.0,161.9 247.0,161.9 248.0,161.9 249.0,161.9 250.0,161.9 251.0,161.9 252.0,161.9 253.0,161.9 254.0,161.9 255.0,161.9 256.0,161.9 257.0,161.9 258.0,161.9 259.0,161.9 260.0,161.9 261.0,161.9 262.0,161.9 263.0,161.9 264.0,161.9 265.0,161.9 266.0,161.9 267.0,161.9 268.0,161.9 269.0,161.9 270.0,161.9 271.0,161.9 272.0,161.9 273.0,161.9 274.0,161.9 275.0,161.9 276.0,161.9 277.0,161.9 278.0,161.9 279.0,161.9 280.0,161.9 281.0,161.9 282.0,161.9 283.0,161.9 284.0,161.9 285.0,161.9 286.0,161.9 287.0,161.9 288.0,161.9 289.0,161.9 290.0,161.9 291.0,161.9 292.0,161.9 293.0,161.9 294.0,161.9 295.0,161.9 296.0,161.9 297.0,161.9 298.0,161.9 299.0,161.9 300.0,161.9 301.0,161.9 302.0,161.9 303.0,161.9 304.0,161.9 305.0,161.9 306.0,161.9 307.0,161.9 308.0,161.9 309.0,161.9 310.0,161.9 311.0,161.9 312.0,161.9 313.0,161.9 314.0,161.9 315.0,161.9 316.0,161.9 317.0,161.9 318.0,161.9 319.0,161.9 320.0,161.9 321.0,161.9 322.0,161.9 323.0,161.9 324.0,161.9 325.0,161.9 326.0,161.9 327.0,161.9 328.0,161.9 329.0,161.9 330.0,161.9 331.0,161.9 332.0,161.9 333.0,161.9 334.0,161.9 335.0,161.9 336.0,161.9 337.0,161.9 338.0,161.9 339.0,161.9 340.0,161.9 341.0,161.9 342.0,161.9 343.0,161.9 344.0,161.9 345.0,161.9 346.0,161.9 347.0,161.9 348.0,161.9 349.0,161.9 350.0,161.9 351.0,161.9 352.0,161.9 353.0,161.9 354.0,161.9 355.0,161.9 356.0,161.9 357.0,161.9 358.0,161.9 359.0,161.9 360.0,161.9 361.0,161.9 362.0,161.9 363.0,161.9 364.0,161.9 365.0,161.9 366.0,161.9 367.0,161.9 368.0,161.9 369.0,161.9 370.0,161.9 371.0,161.9 372.0,161.9 373.0,161.9 374.0,161.9 375.0,161.9 376.0,161.9 377.0,161.9 378.0,161.9 379.0,161.9 380.0,161.9 381.0,161.9 382.0,161.9 383.0,161.9 384.0,161.9 385.0,161.9 386.0,161.9 387.0,161.9 388.0,161.9 389.0,161.9 390.0,161.9 391.0,161.9 392.0,161.9 393.0,161.9 394.0,161.9 395.0,161.9 396.0,161.9 397.0,161.9 398.0,161.9 399.0,161.9 400.0,161.9 401.0,161.9 402.0,161.9 403.0,161.9 404.0,161.9 405.0,161.9 406.0,161.9 407.0,161.9 408.0,161.9 409.0,161.9 410.0,161.9 411.0,161.9 412.0,161.9 413.0,161.9 414.0,161.9 415.0,161.9 416.0,161.9 417.0,161.9 418.0,162.5 419.0,163.4 420.0,164.3 421.0,165.2 422.0,166.1 423.0,167.0 424.0,167.9 425.0,168.8 426.0,169.7 427.0,170.6 428.0,171.5 429.0,172.4 430.0,173.3 431.0,174.2 432.0,175.0 433.0,175.9 434.0,176.8 435.0,177.7 436.0,178.6 437.0,179.5 438.0,180.4 439.0,181.3 440.0,182.2 441.0,183.1 442.0,184.0 443.0,184.9 444.0,185.8 445.0,186.7 446.0,187.5 447.0,188.4 448.0,189.3 449.0,190.2 450.0,191.1 451.0,192.0 452.0,192.9 453.0,193.8 454.0,194.7 455.0,195.6 456.0,196.5 457.0,197.4 458.0,198.3 459.0,199.2 460.0,200.0 461.0,200.9 462.0,201.8 463.0,202.7 464.0,203.6 465.0,204.5 466.0,205.4 467.0,206.3 468.0,207.2 469.0,208.1 470.0,209.0 471.0,209.9 472.0,210.8 473.0,211.7 474.0,212.6 475.0,213.4 476.0,214.3 477.0,215.2 478.0,216.1 479.0,217.0 480.0,217.9 481.0,218.8 482.0,219.7 483.0,220.6 484.0,221.5 485.0,222.4 486.0,223.3 487.0,224.2 488.0,225.1 489.0,225.9 490.0,226.8 491.0,227.7 492.0,228.6 493.0,229.5 494.0,230.4 495.0,231.3 496.0,232.2 497.0,233.1 498.0,234.0 499.0,234.9 500.0,235.8 501.0,236.7 502.0,237.6 503.0,238.4 504.0,239.3 505.0,240.2 506.0,241.1 507.0,242.0 508.0,242.9 509.0,243.8 510.0,244.7 511.0,245.6 512.0,246.5 513.0,247.4 514.0,248.3 515.0,249.2 516.0,250.1 517.0,250.9 518.0,251.8 519.0,252.7 520.0,253.6 521.0,254.5 522.0,255.4 523.0,256.3 524.0,257.2 525.0,258.1 526.0,259.0 527.0,259.9 528.0,260.8 529.0,261.7 530.0,262.6 531.0,263.5 532.0,264.3 533.0,265.2 534.0,266.1 535.0,267.0 536.0,267.9 537.0,268.8 538.0,269.7 539.0,270.6 540.0,271.5 541.0,272.4 542.0,273.3 543.0,274.2 544.0,275.1 545.0,276.0 546.0,276.8 547.0,277.7 548.0,278.6 549.0,279.5 550.0,280.4 551.0,281.3 552.0,282.2 553.0,283.1 554.0,284.0 555.0,284.9 556.0,285.8 557.0,286.7 558.0,287.6 559.0,288.5 560.0,289.3 561.0,290.2 562.0,291.1 563.0,292.0 564.0,292.9 565.0,293.8 566.0,294.7 567.0,295.6 568.0,296.5 569.0,297.4 570.0,298.3 571.0,299.2 572.0,300.1 573.0,301.0 574.0,301.8 575.0,302.7 576.0,303.6 577.0,304.5 578.0,305.4 579.0,306.3 580.0,307.2 581.0,308.1 582.0,309.0 583.0,309.9 584.0,310.8 585.0,311.7 586.0,312.6 587.0,313.5 588.0,314.4 589.0,315.2 590.0,316.1 591.0,317.0 592.0,317.9 593.0,318.8 594.0,319.7 595.0,320.6 596.0,321.5 597.0,322.4 598.0,323.3 599.0,324.2 600.0,325.1 601.0,326.0 602.0,326.9 603.0,327.7 604.0,328.6 605.0,329.5 606.0,330.4 607.0,331.3 608.0,332.2 609.0,333.1 610.0,334.0 611.0,334.9 612.0,335.8 613.0,336.7 614.0,337.6 615.0,338.5 616.0,339.4 617.0,340.2 618.0,341.1 619.0,342.0 620.0,342.9 621.0,343.8 622.0,344.7 623.0,345.6 624.0,346.5 625.0,347.4 626.0,348.3 627.0,349.2 628.0,350.1 629.0,351.0 630.0,351.9 631.0,352.7 632.0,353.6 633.0,354.5 634.0,355.4 635.0,356.3 636.0,357.2 637.0,358.1 638.0,359.0 639.0,359.9 640.0,360.8 641.0,361.7 642.0,362.6 643.0,363.5 644.0,364.4 645.0,365.3 646.0,366.1 647.0,367.0 648.0,367.9 649.0,368.8 650.0,369.7 651.0,370.6 652.0,371.5 653.0,372.4 654.0,373.3 655.0,374.2 656.0,375.1 657.0,376.0 658.0,376.9 659.0,377.8 660.0,378.6 661.0,379.5 662.0,380.4 663.0,381.3 664.0,382.2 665.0,383.1 666.0,384.0 667.0,384.9 668.0,385.8 669.0,386.7 670.0,387.6 671.0,388.5 672.0,389.4 673.0,390.3 674.0,391.1 675.0,392.0 676.0,392.9 677.0,393.8 678.0,394.7 679.0,395.6 680.0,396.5 681.0,397.4 682.0,398.3 683.0,399.2 684.0,400.1 685.0,401.0 686.0,401.9 687.0,402.8 688.0,403.7 689.0,404.5 690.0,405.4 691.0,406.3 692.0,407.2 693.0,408.1 694.0,409.0 695.0,409.9 696.0,410.8 697.0,411.7 698.0,412.6 699.0,413.5 700.0,414.4 701.0,415.3 702.0,416.2 703.0,417.0 704.0,417.9 705.0,418.8 706.0,419.7 707.0,420.6 708.0,421.5 709.0,422.4 710.0,423.3 711.0,424.2 712.0,425.1 713.0,426.0 714.0,426.9 715.0,427.8 716.0,428.7 717.0,429.5 718.0,430.4 719.0,431.3 720.0,432.2 721.0,433.1 722.0,434.0 723.0,434.9 724.0,435.8 725.0,436.7 726.0,437.6 727.0,438.5 728.0,439.4 729.0,440.3 730.0,441.2 731.0,442.0 732.0,442.9 733.0,443.8 734.0,444.7 735.0,445.6 736.0,446.5 737.0,447.4 738.0,448.3 739.0,449.2 740.0,450.1 741.0,451.0"/>
</svg>
<svg id="ctext" width="930" height="571" viewBox="0 0 930 571" style="position:absolute;left:0;top:0" font-family="Liberation Sans, sans-serif" font-size="11.6" fill="#000" stroke="#000" stroke-width="0.15">
<text x="14.3" y="154.7" textLength="47.5" lengthAdjust="spacingAndGlyphs">1000000</text>
<text x="21.1" y="216.7" textLength="40.7" lengthAdjust="spacingAndGlyphs">500000</text>
<text x="55.0" y="279.6" textLength="6.8" lengthAdjust="spacingAndGlyphs">0</text>
<rect x="14.9" y="337.9" width="4.4" height="1.1" stroke="none"/><text x="21.1" y="342.6" textLength="40.7" lengthAdjust="spacingAndGlyphs">500000</text>
<rect x="8.1" y="400.9" width="4.4" height="1.1" stroke="none"/><text x="14.3" y="405.6" textLength="47.5" lengthAdjust="spacingAndGlyphs">1000000</text>
<rect x="8.1" y="463.9" width="4.4" height="1.1" stroke="none"/><text x="14.3" y="468.6" textLength="47.5" lengthAdjust="spacingAndGlyphs">1500000</text>
<rect x="8.1" y="526.9" width="4.4" height="1.1" stroke="none"/><text x="14.3" y="531.6" textLength="47.5" lengthAdjust="spacingAndGlyphs">2000000</text>
<rect x="772.0" y="149.9" width="4.4" height="1.1" stroke="none"/><text x="778.2" y="154.7" textLength="13.6" lengthAdjust="spacingAndGlyphs">10</text>
<rect x="772.0" y="195.9" width="4.4" height="1.1" stroke="none"/><text x="778.2" y="200.7" textLength="13.6" lengthAdjust="spacingAndGlyphs">20</text>
<rect x="772.0" y="243.9" width="4.4" height="1.1" stroke="none"/><text x="778.2" y="248.7" textLength="13.6" lengthAdjust="spacingAndGlyphs">30</text>
<rect x="772.0" y="290.9" width="4.4" height="1.1" stroke="none"/><text x="778.2" y="295.6" textLength="13.6" lengthAdjust="spacingAndGlyphs">40</text>
<rect x="772.0" y="337.9" width="4.4" height="1.1" stroke="none"/><text x="778.2" y="342.6" textLength="13.6" lengthAdjust="spacingAndGlyphs">50</text>
<rect x="772.0" y="384.9" width="4.4" height="1.1" stroke="none"/><text x="778.2" y="389.6" textLength="13.6" lengthAdjust="spacingAndGlyphs">60</text>
<rect x="772.0" y="432.9" width="4.4" height="1.1" stroke="none"/><text x="778.2" y="437.6" textLength="13.6" lengthAdjust="spacingAndGlyphs">70</text>
<rect x="772.0" y="479.9" width="4.4" height="1.1" stroke="none"/><text x="778.2" y="484.6" textLength="13.6" lengthAdjust="spacingAndGlyphs">80</text>
<rect x="772.0" y="526.9" width="4.4" height="1.1" stroke="none"/><text x="778.2" y="531.6" textLength="13.6" lengthAdjust="spacingAndGlyphs">90</text>
<text x="64.5" y="541.8" textLength="40.7" lengthAdjust="spacingAndGlyphs">160000</text>
<text x="185.3" y="541.8" textLength="40.7" lengthAdjust="spacingAndGlyphs">170000</text>
<text x="326.4" y="541.8" textLength="40.7" lengthAdjust="spacingAndGlyphs">180000</text>
<text x="467.5" y="541.8" textLength="40.7" lengthAdjust="spacingAndGlyphs">190000</text>
<text x="608.6" y="541.8" textLength="40.7" lengthAdjust="spacingAndGlyphs">200000</text>
<text x="749.7" y="541.8" textLength="40.7" lengthAdjust="spacingAndGlyphs">210000</text>
<text x="424.0" y="212.2" textLength="40.7" lengthAdjust="spacingAndGlyphs">185000</text>
</svg>

<!-- tooltip -->
<div class="abs" style="left:419px;top:399px;width:135px;height:102px;box-sizing:border-box;background:#ffffe1;border:1px solid #000;border-radius:2px"></div>
<svg class="abs" style="left:0;top:0" width="930" height="571" font-family="Liberation Sans, sans-serif" font-size="11.8" stroke="#000" stroke-width="0.12">
<text x="421.6" y="415.3" textLength="128" lengthAdjust="spacingAndGlyphs">Суммарный портфель</text>
<text x="421.6" y="431.1" textLength="54" lengthAdjust="spacingAndGlyphs">Фьючерс</text><text x="488.2" y="431.1" textLength="58.8" lengthAdjust="spacingAndGlyphs">185000.00</text>
<text x="421.6" y="446.9" textLength="51" lengthAdjust="spacingAndGlyphs">Прибыль</text><text x="485.7" y="446.9" textLength="58.8" lengthAdjust="spacingAndGlyphs">897820.00</text>
<text x="421.6" y="462.6" textLength="103" lengthAdjust="spacingAndGlyphs">Ожидаемая -0.28</text>
<text x="421.6" y="478.4" textLength="111.4" lengthAdjust="spacingAndGlyphs">Дельта -52.426541</text>
</svg>
<!-- TOOLBAR -->
<div class="abs" id="tb" style="left:0;top:548px;width:930px;height:23px;background:#ebe8eb"></div>

<div class="abs" style="left:0;top:548px;width:930px;height:1px;background:#f3f2f5"></div><div class="abs" style="left:0;top:549px;width:930px;height:1px;background:#e2e0e4"></div><div class="abs" style="left:0;top:550px;width:930px;height:1px;background:#a8a6ab"></div>
<div class="chk" style="left:88px;width:19px"></div>
<div class="chk" style="left:113px;width:18px"></div>
<div class="chk" style="left:133px;width:18px"></div>
<div class="chk" style="left:354px;width:18px"></div>
<!-- clipped icon bits at top -->
<svg class="abs" style="left:0;top:548px" width="930" height="23" viewBox="0 548 930 23">
<g fill="#000">
<rect x="8" y="551" width="1.6" height="1.2"/><rect x="27.5" y="551" width="1.6" height="1.2"/>
<rect x="48" y="551" width="9" height="1.6"/>
<rect x="82.5" y="551" width="1.4" height="1.2"/>
<rect x="160.5" y="551" width="1.5" height="1"/><rect x="165" y="551" width="2" height="1"/>
<rect x="199" y="551" width="10" height="1.2"/>
<rect x="416.2" y="551" width="1.8" height="1.2"/><rect x="422.3" y="551" width="1.8" height="1.2"/>
</g>
<g fill="#1a1ab0"><rect x="227" y="551" width="1.3" height="1"/><rect x="229.2" y="551" width="1.3" height="1"/>
<rect x="336" y="551" width="1.3" height="1"/><rect x="338.2" y="551" width="1.3" height="1"/><rect x="340.4" y="551" width="1.3" height="1"/></g>
<!-- zoom in / out -->
<g fill="none" stroke="#000" stroke-width="1.3">
<circle cx="8.8" cy="561" r="4.3" stroke-width="1.1"/><path d="M5.4 561 H12.2 M8.8 557.6 V564.4" stroke-width="2.6"/>
<circle cx="28" cy="561" r="4.4" stroke-width="1.1"/><path d="M24.6 561 H31.4" stroke-width="2.4"/>
<path d="M48.3 556.8 H56.7 L48.3 565 H57" stroke-width="1.1"/>
</g>
<!-- lines icon -->
<g fill="none" stroke-width="1.1">
<path d="M73 558.3 H79 L82 561.6" stroke="#00f"/>
<path d="M82 561.6 L84 563.8" stroke="#000"/>
<path d="M73 561.3 H79" stroke="#000"/>
<path d="M73 564.4 H79.5 L83.8 560.2" stroke="#f00"/>
<path d="M79.5 560 L83.8 555.8" stroke="#000"/>
</g>
<!-- red V and curve -->
<path d="M116.8 559.6 L123.1 566 L129.2 559.8" fill="none" stroke="#f00000" stroke-width="1.5"/>
<path d="M136.2 559.8 Q142 568.6 148 559.8" fill="none" stroke="#f00000" stroke-width="1.1"/>
<!-- copy icon -->
<path d="M160.7 555.6 H165.4 L167.4 557.6 V564.3 H160.7 Z" fill="#fff" stroke="#000" stroke-width="1.2"/>
<path d="M165.2 555.6 V557.8 H167.4" fill="none" stroke="#000" stroke-width="1"/>
<g stroke="#000" stroke-width="1.1"><path d="M162 558.4 H164 M162 560.6 H166 M162 562.5 H166"/></g>
<rect x="167.2" y="558.9" width="4.6" height="8" fill="#fff"/>
<path d="M166.7 567 V558.4 H171.9 V561.6" fill="none" stroke="#000080" stroke-width="1.2"/>
<g stroke="#000" stroke-width="1.1"><path d="M168.5 561.5 H170.5 M168.2 563.5 H172 M168.2 565.4 H172"/></g>
<!-- refresh -->
<g fill="none" stroke="#008000" stroke-width="1.7">
<path d="M183 560.4 A3.6 3.2 0 0 1 189.2 560.6"/>
<path d="M188.2 563.4 A3.6 3.2 0 0 1 182 563.2"/>
</g>
<path d="M180.8 557.8 V562.2 H185.2 Z" fill="#008000"/>
<path d="M190.4 566 V561.6 H186 Z" fill="#008000"/>
<!-- notepad -->
<rect x="199.6" y="556.6" width="8.8" height="8.6" fill="#fff" stroke="#000" stroke-width="1.3"/>
<g stroke="#000" stroke-width="1"><path d="M201 559.5 H207 M201 561.5 H207 M201 563.5 H207"/><path d="M200.7 554.6 V557 M202.9 554.6 V557 M205.1 554.6 V557 M207.3 554.6 V557" stroke-width="1.2"/></g>
<!-- left arrow -->
<path d="M222.6 560.8 L228.6 554.6 H230 V557.6 H235.2 V565.4 H230.2 V567.2 H227.6 Z" fill="#000080"/>
<path d="M224.6 560.3 L229 556.4 V558.7 H234.4 V561.3 H229 V562.6 H227.2 Z" fill="#fff"/>
<!-- right arrow -->
<path d="M338.6 554.9 L344 560.4 L338.6 566.8 V563.6 H332 V558 H338.6 Z" fill="#fff" stroke="none"/>
<path d="M332 558.2 H337.5 M338.4 555 L343.9 560.5 L338.4 566.8" fill="none" stroke="#000080" stroke-width="1.1"/>
<path d="M332 563.2 H337.6" stroke="#000080" stroke-width="2.6"/>
<path d="M336.5 555 V558 M338.4 555 V558.4 M336.5 564.4 V567 M338.4 563 V567" stroke="#000080" stroke-width="1"/>
</svg>
<div class="sep" style="left:40px"></div><div class="sep" style="left:65px"></div>
<div class="sep" style="left:109px"></div><div class="sep" style="left:153px"></div>
<div class="sep" style="left:216px"></div><div class="sep" style="left:350px"></div>
<div class="abs" style="left:93.5px;top:553px;font-family:'Liberation Serif',serif;font-weight:bold;font-size:12.5px;line-height:16px;-webkit-text-stroke:0.4px #000">Σ</div>
<!-- date picker -->
<div class="abs" style="left:241px;top:551px;width:85px;height:20px;box-sizing:border-box;background:#fff;border-top:1px solid #9c9a9f;border-left:1px solid #b0aeb3;border-right:1px solid #f6f5f7;box-shadow:inset 1px 2px 0 #6e6c71,inset -1px 0 0 #9c9a9f"></div>
<div class="abs" style="left:244px;top:555px;width:62px;height:16px;overflow:hidden;font-size:13.4px;line-height:19px;white-space:nowrap"><span style="display:inline-block;transform:scaleX(1.0);transform-origin:0 50%">27.06.2011</span></div>
<div class="abs" style="left:306px;top:554px;width:19px;height:15px;box-sizing:border-box;background:#ebe8eb;border-top:1px solid #fff;border-left:1px solid #fff;border-right:2px solid #8a888d;border-bottom:2px solid #8a888d"></div>
<svg class="abs" style="left:312px;top:560px" width="8" height="5"><path d="M0.6 0.6 H6.6 L3.6 3.8 Z" fill="#000"/></svg>
<!-- greek buttons -->
<svg class="abs" style="left:0;top:548px" width="930" height="23" viewBox="0 548 930 23" font-family="Liberation Serif, serif" font-weight="bold" font-size="11.5">
<path d="M364 557.8 L367.4 564.8 H368.2 V566.2 H359.8 V564.8 H360.6 Z M364 562.2 L362.9 564.6 H365.1 Z" fill="#000" fill-rule="evenodd"/>
<path d="M379.4 557.6 L382 561.4 L384.7 557.6 M382 560.6 V565" fill="none" stroke="#000" stroke-width="1.9"/><path d="M378.8 557.6 H380.6 M383.5 557.6 H385.3" stroke="#000" stroke-width="1.3"/>
<ellipse cx="401.1" cy="560.7" rx="2.6" ry="3.3" fill="none" stroke="#000" stroke-width="1.7"/><path d="M399 560.7 H403.2" stroke="#000" stroke-width="1.3"/>
<path d="M415.8 556.2 H419 V557.4 H418.4 L420 563.2 L421.6 557.4 H421 V556.2 H424.1 V557.4 H423.6 L421 566 H419 L416.4 557.4 H415.8 Z" fill="#000"/>
</svg>
<div class="abs" style="left:927px;top:140px;width:1px;height:408px;background:#e6e4e8"></div>
<div class="abs" style="left:805px;top:547px;width:123px;height:1px;background:#e6e4e8"></div>
<div class="abs" style="left:928px;top:140px;width:1px;height:431px;background:#c0c9e4"></div>
<div class="abs" style="left:929px;top:104px;width:1px;height:467px;background:#2a4eaa"></div>
</div></body></html>
